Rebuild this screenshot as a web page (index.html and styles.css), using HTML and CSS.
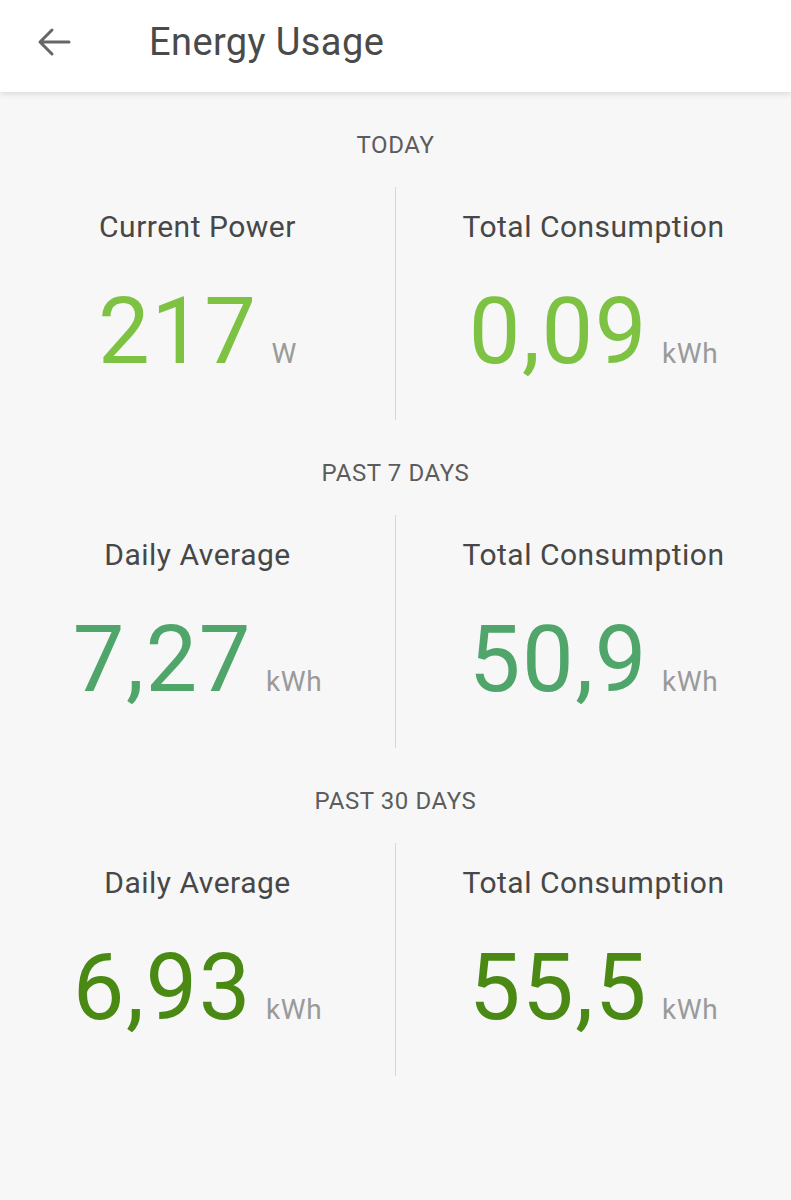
FILE: index.html
```html
<!DOCTYPE html>
<html lang="en">
<head>
  <meta charset="UTF-8" />
  <meta name="viewport" content="width=device-width, initial-scale=1.0" />
  <title>Energy Usage</title>
  <link rel="stylesheet" href="styles.css">
</head>
<body>
  <div class="top-bar">
    <svg class="back-icon" viewBox="0 0 34 30" width="34" height="30">
      <path d="M32 15H3M15 3L3 15l12 12" fill="none" stroke="#666" stroke-width="3" stroke-linecap="round" stroke-linejoin="round"/>
    </svg>
    <h1>Energy Usage</h1>
  </div>

  <div class="section">
    <h2>TODAY</h2>
    <div class="stats">
      <div class="stat">
        <div class="label">Current Power</div>
        <div class="value light"><span class="num">217</span><span class="unit">W</span></div>
      </div>
      <div class="divider"></div>
      <div class="stat">
        <div class="label">Total Consumption</div>
        <div class="value light"><span class="num">0,09</span><span class="unit">kWh</span></div>
      </div>
    </div>
  </div>

  <div class="section">
    <h2>PAST 7 DAYS</h2>
    <div class="stats">
      <div class="stat">
        <div class="label">Daily Average</div>
        <div class="value mid"><span class="num">7,27</span><span class="unit">kWh</span></div>
      </div>
      <div class="divider"></div>
      <div class="stat">
        <div class="label">Total Consumption</div>
        <div class="value mid"><span class="num">50,9</span><span class="unit">kWh</span></div>
      </div>
    </div>
  </div>

  <div class="section">
    <h2>PAST 30 DAYS</h2>
    <div class="stats">
      <div class="stat">
        <div class="label">Daily Average</div>
        <div class="value dark"><span class="num">6,93</span><span class="unit">kWh</span></div>
      </div>
      <div class="divider"></div>
      <div class="stat">
        <div class="label">Total Consumption</div>
        <div class="value dark"><span class="num">55,5</span><span class="unit">kWh</span></div>
      </div>
    </div>
  </div>
</body>
</html>
```

FILE: styles.css
```css
body {
  font-family: Roboto, 'Noto Sans', sans-serif;
  background: #f7f7f7;
  color: #444;
  margin: 0;
  padding: 0;
  height: 1200px;
}
.top-bar {
  display: flex;
  align-items: center;
  height: 92px;
  background: white;
  box-shadow: 0 2px 6px rgba(0,0,0,0.12);
  position: relative;
}
.back-icon {
  margin-left: 37px;
  margin-top: -8px;
}
.top-bar h1 {
  margin: -8px 0 0 78px;
  font-size: 38px;
  letter-spacing: 0.4px;
  font-weight: 400;
  color: #4a4a4a;
}
.section {
  padding-top: 39px;
}
.section h2 {
  margin: 0;
  text-align: center;
  font-size: 24px;
  letter-spacing: 0.6px;
  line-height: 28px;
  font-weight: 400;
  color: #5c5c5c;
}
.stats {
  display: grid;
  grid-template-columns: 1fr 1px 1fr;
  margin-top: 28px;
  height: 233px;
}
.divider {
  background: #d6d6d6;
}
.stat {
  padding-top: 23px;
  text-align: center;
}
.label {
  font-size: 30px;
  letter-spacing: 0.5px;
  line-height: 34px;
  color: #474747;
}
.value {
  display: flex;
  justify-content: center;
  align-items: baseline;
  margin-top: 38px;
}
.num {
  font-size: 92px;
  letter-spacing: 1.5px;
  line-height: 100px;
}
.unit {
  font-size: 28px;
  letter-spacing: 0.6px;
  color: #9a9a9a;
  margin-left: 14px;
}
.light { color: #7dc242; }
.mid { color: #4fa56a; }
.dark { color: #4a8a14; }
```
